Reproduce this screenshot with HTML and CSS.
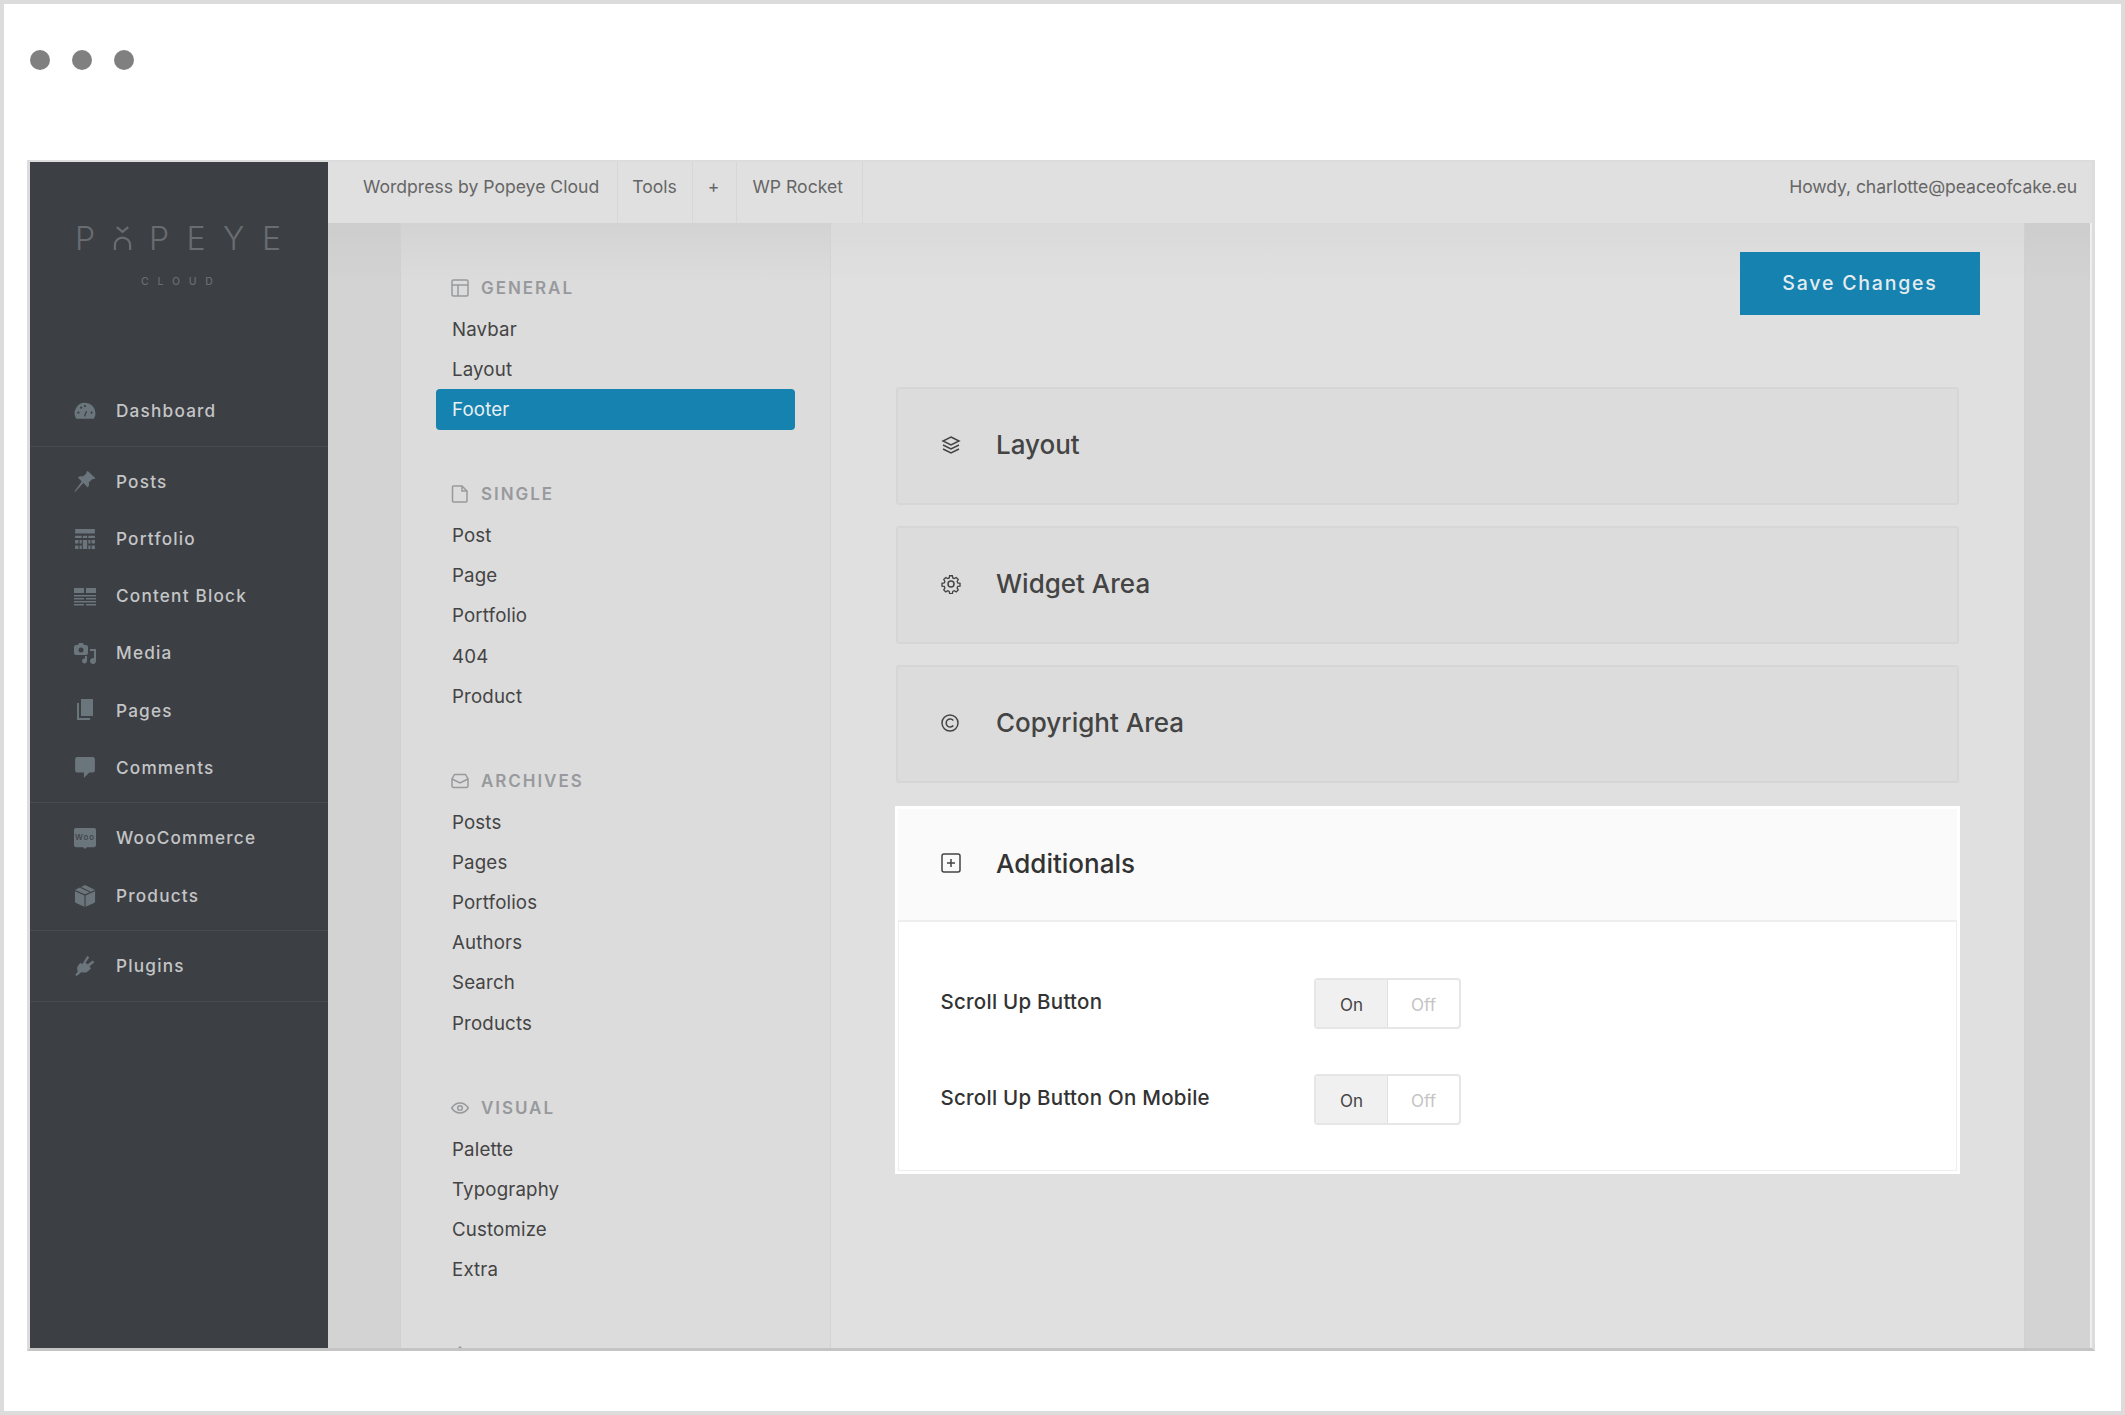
FILE: index.html
```html
<!DOCTYPE html>
<html lang="en">
<head>
    <meta charset="UTF-8">
    <meta name="viewport" content="width=device-width, initial-scale=1.0">
    <title>Popeye Cloud</title>
    <link rel="stylesheet" href="styles.css">
</head>
<body>
<div class="window">
    <div class="dots"><span></span><span></span><span></span></div>

    <div class="screen">
        <aside class="sidebar">
            <div class="logo">
                <div class="logo-name">
                    <span>P</span>
                    <svg class="logo-o" viewBox="0 0 20 26" fill="none" stroke="currentColor" stroke-width="2.4"><path d="M4 1l6 5 6-5"/><path d="M2 25v-5a8 8 0 0 1 16 0v5"/></svg>
                    <span>P</span><span>E</span><span>Y</span><span>E</span>
                </div>
                <div class="logo-sub">CLOUD</div>
            </div>

            <div class="side-group">
                <a class="side-item">
                    <svg viewBox="0 0 20 20"><path fill-rule="evenodd" d="M10 2.500a9.500 9.500 0 0 1 9.500 9.500c0 2-.6 3.600-1.500 5H2A9.500 9.500 0 0 1 10 2.500zM10.800 10l-1.700 4.500 1 .8 1.800-5zM4 10.500a1 1 0 1 0 0 2 1 1 0 0 0 0-2zM6.500 6a1 1 0 1 0 0 2 1 1 0 0 0 0-2zM10 4.500a1 1 0 1 0 0 2 1 1 0 0 0 0-2zM16 10.500a1 1 0 1 0 0 2 1 1 0 0 0 0-2z"/></svg>
                    Dashboard
                </a>
            </div>
            <div class="side-group">
                <a class="side-item">
                    <svg viewBox="0 0 20 20"><path d="M12.500 0l7 6.500-1.500 1-1-.5-3.500 3.500c.500 2 0 3.500-1 4.500L8.500 11 1 19l-.500-.500L7 9.500 3.500 6c1-1 3-1.500 4.500-1L11.500 2l-.500-1z"/></svg>
                    Posts
                </a>
                <a class="side-item">
                    <svg viewBox="0 0 20 20"><path d="M1 1h18v4H1zM1 7h6v2H1zM8 7h4v2H8zM13 7h6v2h-6zM1 11h3v3H1zM5 11h2v3H5zM8 11h4v8H8zM13 11h2v3h-2zM16 11h3v3h-3zM1 16h3v3H1zM5 16h2v3H5zM13 16h2v3h-2zM16 16h3v3h-3z"/></svg>
                    Portfolio
                </a>
                <a class="side-item">
                    <svg viewBox="0 0 22 20"><path d="M0 2h10v5H0zM12 2h10v5H12zM0 9h22v1.500H0zM0 12h10v1.500H0zM12 12h10v1.500H12zM0 15h22v1.500H0zM0 18h10v1.500H0zM12 18h10v1.500H12z"/></svg>
                    Content Block
                </a>
                <a class="side-item">
                    <svg viewBox="0 0 22 22"><path fill-rule="evenodd" d="M5 1h4l1 2h2a2 2 0 0 1 2 2v6a2 2 0 0 1-2 2H2a2 2 0 0 1-2-2V5a2 2 0 0 1 2-2h2zM7 5.500a2.500 2.500 0 1 0 0 5 2.500 2.500 0 0 0 0-5z"/><path d="M16 7h6v12a3 3 0 1 1-2-2.800V9h-4zM11 14h2v5a2.500 2.500 0 1 1-2-2.400z"/></svg>
                    Media
                </a>
                <a class="side-item">
                    <svg viewBox="0 0 20 22"><path d="M6 0h12v17H6z"/><path d="M2 4h2v15h11v2H2z"/></svg>
                    Pages
                </a>
                <a class="side-item">
                    <svg viewBox="0 0 20 20"><path d="M3 0h14a2 2 0 0 1 2 2v10a2 2 0 0 1-2 2h-3l-5 5v-5H3a2 2 0 0 1-2-2V2a2 2 0 0 1 2-2z"/></svg>
                    Comments
                </a>
            </div>
            <div class="side-group">
                <a class="side-item">
                    <svg viewBox="0 0 24 24"><path d="M2 1h20a2 2 0 0 1 2 2v17a2 2 0 0 1-2 2h-8l-2 2-2-2H2a2 2 0 0 1-2-2V3a2 2 0 0 1 2-2z"/><text class="woo-mark" x="12" y="14.500" text-anchor="middle">Woo</text></svg>
                    WooCommerce
                </a>
                <a class="side-item">
                    <svg viewBox="0 0 22 24"><path d="M11 0l10 5a1 1 0 0 1 1 1v12a2 2 0 0 1-1 1.500L11 24 1 19.500a2 2 0 0 1-1-1.500V6a1 1 0 0 1 1-1z"/><path class="icon-cut" d="M0 6l11 5 11-5M11 11v13M6 2.500l10.500 5"/></svg>
                    Products
                </a>
            </div>
            <div class="side-group">
                <a class="side-item">
                    <svg viewBox="0 0 20 20"><path d="M12 1l2 1-3.500 5 2 1.500L17 5l1.500 1.500-4.500 4 1.500 1.500-2 2c-2 2-4.500 2.500-6.500 1.500L2.500 19 1 18l2.500-3C2.500 13 2.500 11 4 9L6 7l1.500 1.500z"/></svg>
                    Plugins
                </a>
            </div>
        </aside>

        <div class="content">
            <header class="topbar">
                <nav class="topnav">
                    <a class="top-brand">Wordpress by Popeye Cloud</a>
                    <a>Tools</a>
                    <a class="top-plus">+</a>
                    <a class="top-rocket">WP Rocket</a>
                </nav>
                <div class="howdy">Howdy, charlotte@peaceofcake.eu</div>
            </header>

            <div class="workspace">
                <div class="strip strip-left"></div>

                <nav class="settings-nav">
                    <div class="nav-section">
                        <div class="nav-label">
                            <svg viewBox="0 0 18 18"><rect x="1" y="1" width="16" height="16" rx="1.500"/><path d="M1 6h16M7 6v11"/></svg>
                            GENERAL
                        </div>
                        <a>Navbar</a>
                        <a>Layout</a>
                        <a class="active">Footer</a>
                    </div>
                    <div class="nav-section">
                        <div class="nav-label">
                            <svg viewBox="0 0 18 18"><path d="M2.500 1H11l5 5v10a1 1 0 0 1-1 1H2.500a1 1 0 0 1-1-1V2a1 1 0 0 1 1-1z"/><path d="M11 1v5h5"/></svg>
                            SINGLE
                        </div>
                        <a>Post</a>
                        <a>Page</a>
                        <a>Portfolio</a>
                        <a>404</a>
                        <a>Product</a>
                    </div>
                    <div class="nav-section">
                        <div class="nav-label">
                            <svg viewBox="0 0 18 18"><path d="M3.500 2.500h11L17 7v7a1.500 1.500 0 0 1-1.500 1.500h-13A1.500 1.500 0 0 1 1 14V7z"/><path d="M1 7l8 4 8-4"/></svg>
                            ARCHIVES
                        </div>
                        <a>Posts</a>
                        <a>Pages</a>
                        <a>Portfolios</a>
                        <a>Authors</a>
                        <a>Search</a>
                        <a>Products</a>
                    </div>
                    <div class="nav-section">
                        <div class="nav-label">
                            <svg viewBox="0 0 18 18"><path d="M.700 9C3 5.500 6 4 9 4s6 1.500 8.300 5C15 12.500 12 14 9 14S3 12.500.700 9z"/><circle cx="9" cy="9" r="2.300"/></svg>
                            VISUAL
                        </div>
                        <a>Palette</a>
                        <a>Typography</a>
                        <a>Customize</a>
                        <a>Extra</a>
                    </div>
                    <div class="nav-section">
                        <div class="nav-label">
                            <svg viewBox="0 0 18 18"><path d="M3 8l6-7 6 7"/></svg>
                        </div>
                    </div>
                </nav>

                <main class="main">
                    <div class="toolbar"><button class="save-btn">Save Changes</button></div>

                    <div class="panels">
                        <section class="panel">
                            <div class="panel-head">
                                <svg viewBox="0 0 20 20"><path d="M10 2l8 4-8 4-8-4z"/><path d="M2 10l8 4 8-4M2 14l8 4 8-4"/></svg>
                                <h2>Layout</h2>
                            </div>
                        </section>
                        <section class="panel">
                            <div class="panel-head">
                                <svg viewBox="0 0 20 20"><circle cx="10" cy="10" r="3"/><path d="M8.500 1h3l.500 2.500 1.600.7L15.800 3 18 5.200l-1.200 2.200.7 1.600L20 9.500v3l-2.500.4-.7 1.600 1.200 2.300L15.800 19l-2.200-1.300-1.600.7-.5 2.600h-3L8 18.400l-1.600-.7L4.200 19 2 16.800l1.200-2.300-.7-1.600L0 12.500v-3L2.500 9l.7-1.600L2 5.200 4.200 3l2.200 1.200L8 3.500z" transform="translate(1 .8) scale(.9)"/></svg>
                                <h2>Widget Area</h2>
                            </div>
                        </section>
                        <section class="panel">
                            <div class="panel-head">
                                <svg viewBox="0 0 20 20"><circle cx="9" cy="10" r="8"/><path d="M12.300 7.500a4 4 0 1 0 0 5"/></svg>
                                <h2>Copyright Area</h2>
                            </div>
                        </section>
                        <section class="panel panel-open">
                            <div class="panel-head">
                                <svg viewBox="0 0 20 20"><rect x="1" y="1" width="18" height="18" rx="2"/><path d="M10 6v8M6 10h8"/></svg>
                                <h2>Additionals</h2>
                            </div>
                            <div class="panel-body">
                                <div class="option">
                                    <span class="option-label">Scroll Up Button</span>
                                    <div class="toggle"><span class="on">On</span><span class="off">Off</span></div>
                                </div>
                                <div class="option">
                                    <span class="option-label">Scroll Up Button On Mobile</span>
                                    <div class="toggle"><span class="on">On</span><span class="off">Off</span></div>
                                </div>
                            </div>
                        </section>
                    </div>
                </main>

                <div class="strip strip-right"></div>
            </div>
        </div>
    </div>
</div>
</body>
</html>
```

FILE: styles.css
```css
* {
    margin: 0;
    padding: 0;
    box-sizing: border-box;
    font-family: Inter, "Open Sans", sans-serif;
}

:root {
    --blue: #1682b0;
    --dark: #3c3f44;
    --icon: #6b757c;
}

body {
    background-color: white;
}

.window {
    width: 2125px;
    height: 1415px;
    border: 4px solid #dcdcdc;
    background-color: white;
    overflow: hidden;
}

.dots {
    display: flex;
    gap: 22px;
    padding: 46px 0 0 26px;
    height: 156px;
}

.dots span {
    width: 20px;
    height: 20px;
    border-radius: 50%;
    background-color: #808080;
}

.screen {
    display: flex;
    margin-left: 23px;
    width: 2068px;
    height: 1191px;
    border: 3px solid #dcdcdc;
    border-bottom: 3px solid #c4c4c4;
    border-top-width: 2px;
    overflow: hidden;
}

/* left dark menu */
.sidebar {
    width: 298px;
    flex-shrink: 0;
    background-color: var(--dark);
}

.logo {
    height: 214px;
    padding-top: 57px;
    color: #696c71;
}

.logo-name {
    display: flex;
    justify-content: space-between;
    align-items: center;
    width: 206px;
    margin-left: 45px;
    height: 38px;
    font-size: 32px;
    font-weight: 300;
}

.logo-o {
    width: 19px;
    height: 25px;
}

.logo-sub {
    margin-top: 18px;
    margin-left: 111px;
    font-size: 10.500px;
    font-weight: 500;
    letter-spacing: 8.800px;
    color: #696c71;
    white-space: nowrap;
}

.side-group {
    padding: 6px 0 6.500px;
    border-bottom: 1px solid #474a4f;
}

.side-item {
    display: flex;
    align-items: center;
    height: 57.200px;
    padding-left: 86px;
    position: relative;
    font-size: 17.200px;
    font-weight: 500;
    letter-spacing: 1.200px;
    color: #c4c5c6;
}

.side-item svg {
    position: absolute;
    left: 44px;
    top: 18px;
    width: 22px;
    height: 22px;
    fill: var(--icon);
}

.side-item .icon-cut {
    fill: none;
    stroke: var(--dark);
    stroke-width: 1.200;
}

.woo-mark {
    font-size: 8.500px;
    font-weight: 500;
    fill: var(--dark);
}

/* top bar */
.content {
    flex: 1;
    display: flex;
    flex-direction: column;
    min-width: 0;
}

.topbar {
    height: 61px;
    flex-shrink: 0;
    display: flex;
    justify-content: space-between;
    align-items: center;
    padding-right: 15px;
    background-color: #e0e0e0;
    color: #666;
    font-size: 17.600px;
}

.topnav {
    display: flex;
    height: 100%;
}

.topnav a {
    display: flex;
    align-items: center;
    padding: 0 15px 12px 14px;
    border-right: 1px solid #d7d7d7;
}

.topnav .top-brand {
    padding-left: 35px;
    padding-right: 18px;
}

.topnav .top-plus {
    padding-left: 15px;
    padding-right: 16px;
}

.topnav .top-rocket {
    padding-left: 16px;
    padding-right: 19px;
}

.howdy {
    padding-bottom: 12px;
    letter-spacing: -0.100px;
}

/* workspace columns */
.workspace {
    flex: 1;
    display: flex;
    min-height: 0;
}

.strip {
    background: linear-gradient(#cdcdcd, #d3d3d3 60px);
}

.strip-left {
    width: 73px;
    border-right: 1px solid #d0d0d0;
}

.strip-right {
    width: 68px;
    border-left: 1px solid #d0d0d0;
    border-right: 2px solid #eee;
}

.settings-nav {
    width: 430px;
    flex-shrink: 0;
    padding: 45px 0 0 35px;
    overflow: hidden;
    background: linear-gradient(#d3d3d3, #dcdcdc 60px);
    border-right: 1px solid #d3d3d3;
    color: #444;
}

.nav-section {
    margin-bottom: 44.800px;
}

.nav-label {
    display: flex;
    align-items: center;
    gap: 12px;
    height: 41px;
    padding-left: 15px;
    padding-bottom: 1px;
    font-size: 17px;
    font-weight: 600;
    letter-spacing: 1.950px;
    color: #98999c;
}

.nav-label svg {
    width: 18px;
    height: 18px;
    flex-shrink: 0;
    fill: none;
    stroke: #98999c;
    stroke-width: 1.500;
}

.nav-section a {
    display: flex;
    align-items: center;
    height: 40.200px;
    width: 359px;
    padding-left: 16px;
    font-size: 18.700px;
    letter-spacing: 0.150px;
    border-radius: 4px;
}

.nav-section a.active {
    background-color: var(--blue);
    color: #e8f0f4;
}

.main {
    flex: 1;
    min-width: 0;
    padding: 29px 44px 0 65px;
    background: linear-gradient(#dadada, #e0e0e0 60px);
}

.toolbar {
    display: flex;
    justify-content: flex-end;
}

.save-btn {
    width: 240px;
    height: 63px;
    padding-bottom: 2px;
    border: none;
    background-color: var(--blue);
    color: #e4ecf0;
    font-size: 19.500px;
    font-weight: 500;
    letter-spacing: 1.800px;
    cursor: pointer;
}

.panels {
    margin: 72px 21px 0 0;
    display: flex;
    flex-direction: column;
    gap: 21px;
}

.panel {
    height: 118px;
    background-color: #dcdcdc;
    border: 2px solid #d6d6d6;
    border-radius: 3px;
}

.panel-head {
    display: flex;
    align-items: center;
    height: 114px;
    padding: 0 0 3px 43px;
    color: #444;
}

.panel-head svg {
    width: 20px;
    height: 20px;
    flex-shrink: 0;
    margin-right: 35px;
    fill: none;
    stroke: #444;
    stroke-width: 1.500;
}

.panel-head h2 {
    font-size: 26px;
    font-weight: 500;
}

.panel-open {
    height: 368px;
    margin: 2px -1px 0;
    background-color: white;
    border: 3px solid white;
    box-shadow: inset 0 0 0 1px #eee;
    border-radius: 0;
}

.panel-open .panel-head {
    height: 113px;
    background-color: #fafafa;
    border-bottom: 2px solid #eee;
    color: #333;
}

.panel-body {
    padding: 56px 0 0 42.500px;
    display: flex;
    flex-direction: column;
    gap: 45px;
}

.option {
    display: flex;
    align-items: flex-start;
}

.option-label {
    width: 373.500px;
    padding-top: 11px;
    font-size: 20.500px;
    font-weight: 500;
    letter-spacing: 0.250px;
    color: #333;
}

.toggle {
    display: flex;
    width: 147px;
    height: 51px;
    border: 2px solid #e6e6e6;
    border-radius: 4px;
    overflow: hidden;
    font-size: 17px;
}

.toggle span {
    display: flex;
    align-items: center;
    justify-content: center;
    padding-top: 2px;
}

.toggle .on {
    width: 72px;
    background-color: #f0f0f0;
    border-right: 1px solid #e0e0e0;
    color: #444;
}

.toggle .off {
    flex: 1;
    color: #c4c4c4;
}
```
